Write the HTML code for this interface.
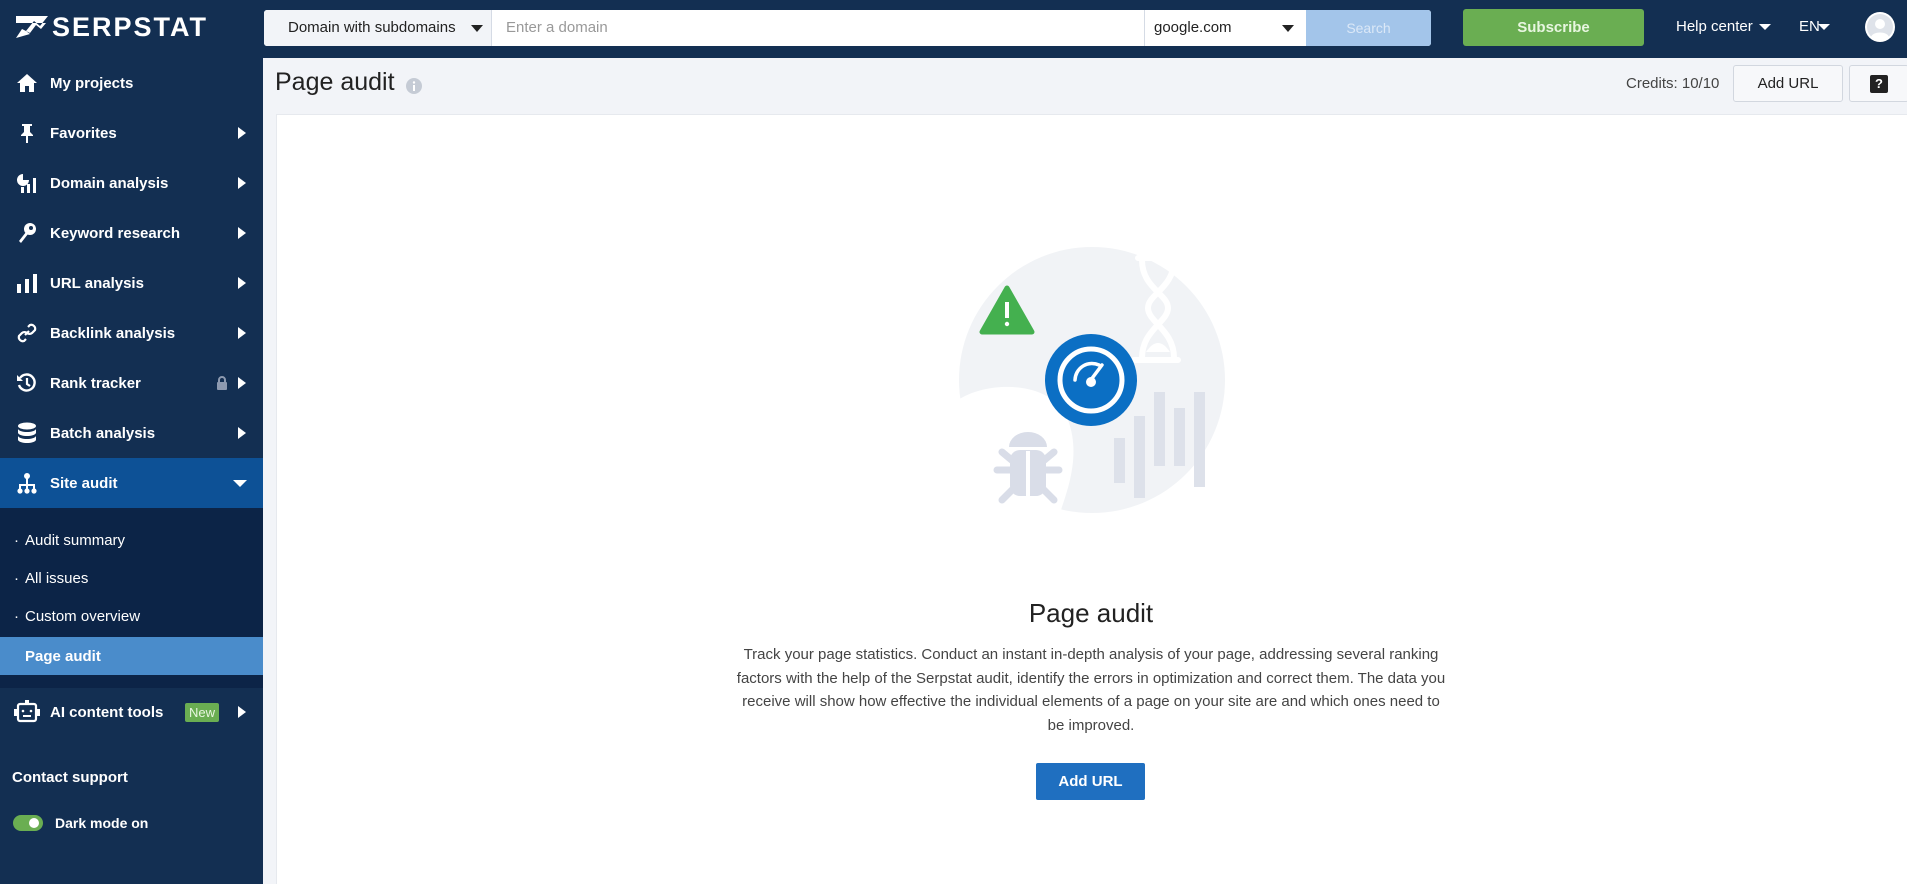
<!DOCTYPE html>
<html><head><meta charset="utf-8"><style>
*{box-sizing:border-box;margin:0;padding:0}
body{width:1907px;height:884px;overflow:hidden;font-family:"Liberation Sans",sans-serif;background:#f2f4f8;position:relative}
.hdr{position:absolute;left:0;top:0;width:1907px;height:58px;background:#132f52}
.side{position:absolute;left:0;top:58px;width:263px;height:826px;background:#132f52}
.abs{position:absolute}
.it{position:absolute;left:0;width:263px;height:50px;color:#fff;font-weight:bold;font-size:15px;display:flex;align-items:center}
.it .ic{width:50px;display:flex;justify-content:center;margin-left:2px}
.it .tx{margin-left:-2px}
.arr{position:absolute;right:17px;top:19px;width:0;height:0;border-top:6px solid transparent;border-bottom:6px solid transparent;border-left:8px solid #fff}
.sub{position:absolute;left:0;width:263px;height:38px;color:#fff;font-size:15px;display:flex;align-items:center;padding-left:14px}
.sub b{font-weight:normal;margin-right:6px}
</style></head><body>
<div class="hdr"></div>
<svg class="abs" style="left:14px;top:14px" width="36" height="26" viewBox="0 0 36 26"><path d="M2 2h32l-8 10-6-5-8 10 4 3-14 4 6-9 8 4 6-8 5 4 5-6H2z" fill="#fff"/></svg>
<div class="abs" style="left:52px;top:12px;color:#fff;font-size:27px;font-weight:bold;letter-spacing:2px">SERPSTAT</div>
<div class="abs" style="left:264px;top:10px;width:1167px;height:36px;background:#fff;border-radius:3px;overflow:hidden">
 <div class="abs" style="left:0;top:0;width:228px;height:36px;background:#f2f4f8;border-right:1px solid #d5dbe5;font-size:15px;color:#222;padding:9px 0 0 24px">Domain with subdomains</div>
 <div class="abs" style="left:207px;top:15px;border-left:6px solid transparent;border-right:6px solid transparent;border-top:7px solid #222"></div>
 <div class="abs" style="left:242px;top:9px;font-size:15px;color:#999">Enter a domain</div>
 <div class="abs" style="left:880px;top:0;width:162px;height:36px;border-left:1px solid #d5dbe5;font-size:15px;color:#222;padding:9px 0 0 9px">google.com</div>
 <div class="abs" style="left:1018px;top:15px;border-left:6px solid transparent;border-right:6px solid transparent;border-top:7px solid #222"></div>
 <div class="abs" style="left:1042px;top:0;width:125px;height:36px;background:#a3c5ea;color:#dbe8f7;font-size:14px;text-align:center;padding-top:10px">Search</div>
</div>
<div class="abs" style="left:1463px;top:9px;width:181px;height:37px;background:#6aae52;border-radius:3px;color:#e8f6e0;font-weight:bold;font-size:15px;text-align:center;padding-top:10px">Subscribe</div>
<div class="abs" style="left:1676px;top:18px;color:#fff;font-size:15px">Help center</div>
<div class="abs" style="left:1759px;top:24px;border-left:6px solid transparent;border-right:6px solid transparent;border-top:6px solid #fff"></div>
<div class="abs" style="left:1799px;top:18px;color:#fff;font-size:15px">EN</div>
<div class="abs" style="left:1818px;top:24px;border-left:6px solid transparent;border-right:6px solid transparent;border-top:6px solid #fff"></div>
<svg class="abs" style="left:1865px;top:12px" width="30" height="30" viewBox="0 0 30 30"><circle cx="15" cy="15" r="15" fill="#fff"/><circle cx="15" cy="15" r="13" fill="#dfe3ea"/><circle cx="15" cy="12" r="5" fill="#fff"/><path d="M6 25c2-6 16-6 18 0a12 12 0 0 1-18 0z" fill="#fff"/></svg>

<div class="side"></div>
<div class="abs" style="left:0;top:508px;width:263px;height:180px;background:#0c2447"></div>
<div class="it" style="top:58px"><span class="ic"><svg width="22" height="20" viewBox="0 0 22 20"><path d="M11 1 1 10h3v9h5v-6h4v6h5v-9h3z" fill="#fff"/></svg></span><span class="tx">My projects</span></div>
<div class="it" style="top:108px"><span class="ic"><svg width="16" height="20" viewBox="0 0 16 20"><path d="M3 1h10v2h-2v6l3 3v1H9v7H7v-7H2v-1l3-3V3H3z" fill="#fff"/></svg></span><span class="tx">Favorites</span><i class="arr"></i></div>
<div class="it" style="top:158px"><span class="ic"><svg width="22" height="20" viewBox="0 0 22 20"><path d="M7 1a6 6 0 1 0 6 6H7z" fill="#fff"/><rect x="5" y="14" width="3" height="6" fill="#fff"/><rect x="11" y="11" width="3" height="9" fill="#fff"/><rect x="17" y="5" width="3" height="15" fill="#fff"/></svg></span><span class="tx">Domain analysis</span><i class="arr"></i></div>
<div class="it" style="top:208px"><span class="ic"><svg width="20" height="22" viewBox="0 0 20 22"><circle cx="13" cy="7" r="6" fill="#fff"/><circle cx="14" cy="6" r="2" fill="#132f52"/><path d="M9 10 2 19l2 2 7-9z" fill="#fff"/></svg></span><span class="tx">Keyword research</span><i class="arr"></i></div>
<div class="it" style="top:258px"><span class="ic"><svg width="22" height="20" viewBox="0 0 22 20"><rect x="1" y="11" width="4" height="9" fill="#fff"/><rect x="9" y="6" width="4" height="14" fill="#fff"/><rect x="17" y="1" width="4" height="19" fill="#fff"/></svg></span><span class="tx">URL analysis</span><i class="arr"></i></div>
<div class="it" style="top:308px"><span class="ic"><svg width="22" height="22" viewBox="0 0 22 22"><path d="M9 13l4-4M12 5l2-2a4 4 0 0 1 5 5l-3 3a4 4 0 0 1-5 0M10 17l-2 2a4 4 0 0 1-5-5l3-3a4 4 0 0 1 5 0" stroke="#fff" stroke-width="2.2" fill="none"/></svg></span><span class="tx">Backlink analysis</span><i class="arr"></i></div>
<div class="it" style="top:358px"><span class="ic"><svg width="22" height="22" viewBox="0 0 22 22"><path d="M4 6a8 8 0 1 1-1 7" stroke="#fff" stroke-width="2.4" fill="none"/><path d="M1 3v6h6z" fill="#fff"/><path d="M11 6v6l3 2" stroke="#fff" stroke-width="2.2" fill="none"/></svg></span><span class="tx">Rank tracker</span><svg class="abs" style="left:216px;top:18px" width="12" height="14" viewBox="0 0 12 14"><path d="M3 6V4a3 3 0 0 1 6 0v2" stroke="#8d9ab0" stroke-width="2" fill="none"/><rect x="1" y="6" width="10" height="8" rx="1" fill="#8d9ab0"/></svg><i class="arr"></i></div>
<div class="it" style="top:408px"><span class="ic"><svg width="20" height="22" viewBox="0 0 20 22"><ellipse cx="10" cy="4" rx="9" ry="3.5" fill="#fff"/><path d="M1 7c2 4 16 4 18 0v4c-2 4-16 4-18 0zM1 14c2 4 16 4 18 0v4c-2 4-16 4-18 0z" fill="#fff"/></svg></span><span class="tx">Batch analysis</span><i class="arr"></i></div>
<div class="it" style="top:458px;background:#0d5196"><span class="ic"><svg width="22" height="22" viewBox="0 0 22 22"><circle cx="11" cy="4" r="3" fill="#fff"/><path d="M11 6v6M4 18v-5h14v5M11 12v6" stroke="#fff" stroke-width="2" fill="none"/><circle cx="4" cy="19" r="2.6" fill="#fff"/><circle cx="11" cy="19" r="2.6" fill="#fff"/><circle cx="18" cy="19" r="2.6" fill="#fff"/></svg></span><span class="tx">Site audit</span><i class="abs" style="left:233px;top:22px;border-left:7px solid transparent;border-right:7px solid transparent;border-top:7px solid #fff"></i></div>
<div class="sub" style="top:521px"><b>·</b>Audit summary</div>
<div class="sub" style="top:559px"><b>·</b>All issues</div>
<div class="sub" style="top:597px"><b>·</b>Custom overview</div>
<div class="sub" style="top:637px;background:#4a8ccb;font-weight:bold;padding-left:25px">Page audit</div>
<div class="it" style="top:687px"><span class="ic"><svg width="28" height="26" viewBox="0 0 28 26"><rect x="5" y="5" width="18" height="17" rx="2" stroke="#fff" stroke-width="2.2" fill="none"/><rect x="1" y="10" width="3" height="7" fill="#fff"/><rect x="24" y="10" width="3" height="7" fill="#fff"/><rect x="12" y="1" width="4" height="4" fill="#fff"/><circle cx="10" cy="12" r="1.3" fill="#fff"/><circle cx="18" cy="12" r="1.3" fill="#fff"/><path d="M10 17h8" stroke="#fff" stroke-width="2"/></svg></span><span class="tx">AI content tools</span><span class="abs" style="left:185px;top:16px;background:#6aae52;color:#e8f6e0;font-weight:normal;font-size:13px;padding:2px 4px;border-radius:2px">New</span><i class="arr"></i></div>
<div class="abs" style="left:12px;top:769px;color:#fff;font-weight:bold;font-size:15px">Contact support</div>
<div class="abs" style="left:13px;top:815px;width:30px;height:16px;border-radius:8px;background:#6aae52"></div>
<div class="abs" style="left:29px;top:818px;width:10px;height:10px;border-radius:5px;background:#fff"></div>
<div class="abs" style="left:55px;top:815px;color:#fff;font-weight:bold;font-size:14px">Dark mode on</div>

<div class="abs" style="left:275px;top:68px;font-size:25px;color:#222">Page audit</div>
<svg class="abs" style="left:406px;top:78px" width="16" height="16" viewBox="0 0 16 16"><circle cx="8" cy="8" r="8" fill="#c5cbd5"/><rect x="7" y="7" width="2" height="6" fill="#fff"/><circle cx="8" cy="4.5" r="1.2" fill="#fff"/></svg>
<div class="abs" style="left:1626px;top:75px;font-size:15px;color:#444">Credits: 10/10</div>
<div class="abs" style="left:1733px;top:65px;width:110px;height:37px;background:#f7f8fa;border:1px solid #d2d7df;border-radius:3px;font-size:15px;color:#222;text-align:center;padding-top:9px">Add URL</div>
<div class="abs" style="left:1849px;top:65px;width:60px;height:37px;background:#f7f8fa;border:1px solid #d2d7df;border-radius:3px"></div>
<div class="abs" style="left:1870px;top:75px;width:18px;height:18px;background:#222;border-radius:2px;color:#fff;font-weight:bold;font-size:13px;text-align:center;line-height:18px">?</div>

<div class="abs" style="left:276px;top:114px;width:1631px;height:770px;background:#fff;border-left:1px solid #e6e9ee;border-top:1px solid #e6e9ee"></div>
<svg class="abs" style="left:950px;top:240px" width="290" height="290" viewBox="0 0 290 290">
 <circle cx="142" cy="140" r="133" fill="#f1f3f6"/>
 <path d="M8 160c30-20 95-20 110 20c15 40-5 80-10 100L40 280C10 250 5 200 8 160z" fill="#fff"/>
 <path d="M188 18h40M192 20c0 28 26 34 26 48s-26 22-26 50M224 20c0 28-26 34-26 48s26 22 26 50M184 120h44" stroke="#fff" stroke-width="6" fill="none" stroke-linecap="round"/>
 <path d="M196 112c8-12 16-12 24 0z" fill="#fff"/>
 <path d="M57 48l-25 44h50z" fill="#44b04f" stroke="#44b04f" stroke-width="5" stroke-linejoin="round"/>
 <rect x="55" y="62" width="4" height="16" fill="#fff"/><circle cx="57" cy="84" r="2.2" fill="#fff"/>
 <rect x="164" y="198" width="11" height="45" fill="#dde1ea"/><rect x="184" y="176" width="11" height="82" fill="#dde1ea"/><rect x="204" y="152" width="11" height="74" fill="#dde1ea"/><rect x="224" y="168" width="11" height="58" fill="#dde1ea"/><rect x="244" y="152" width="11" height="95" fill="#dde1ea"/>
 <path d="M59 207a19 15 0 0 1 38 0z" fill="#d9dde8"/>
 <rect x="60" y="210" width="36" height="46" rx="10" fill="#d9dde8"/>
 <path d="M47 230h62M52 212l12 10M104 212l-12 10M52 260l12-12M104 260l-12-12" stroke="#d9dde8" stroke-width="7" stroke-linecap="round"/>
 <rect x="76" y="211" width="4" height="45" fill="#fff"/>
 <circle cx="141" cy="140" r="46" fill="#0b6fc4"/>
 <circle cx="141" cy="140" r="31" fill="none" stroke="#fff" stroke-width="5"/>
 <path d="M125 140a17 17 0 0 1 24-15" fill="none" stroke="#fff" stroke-width="3.5" stroke-linecap="round"/>
 <path d="M140 141l12-16" stroke="#fff" stroke-width="3.5" stroke-linecap="round"/>
 <circle cx="141" cy="142" r="5" fill="#fff"/>
</svg>
<div class="abs" style="left:736px;top:598px;width:710px;text-align:center;font-size:26px;color:#222">Page audit</div>
<div class="abs" style="left:691px;top:643px;width:800px;text-align:center;font-size:15px;line-height:23.6px;color:#444;letter-spacing:0;white-space:nowrap">Track your page statistics. Conduct an instant in-depth analysis of your page, addressing several ranking<br>factors with the help of the Serpstat audit, identify the errors in optimization and correct them. The data you<br>receive will show how effective the individual elements of a page on your site are and which ones need to<br>be improved.</div>
<div class="abs" style="left:1036px;top:763px;width:109px;height:37px;background:#1f6fc0;border-radius:2px;color:#fff;font-weight:bold;font-size:15px;text-align:center;padding-top:10px">Add URL</div>
</body></html>
